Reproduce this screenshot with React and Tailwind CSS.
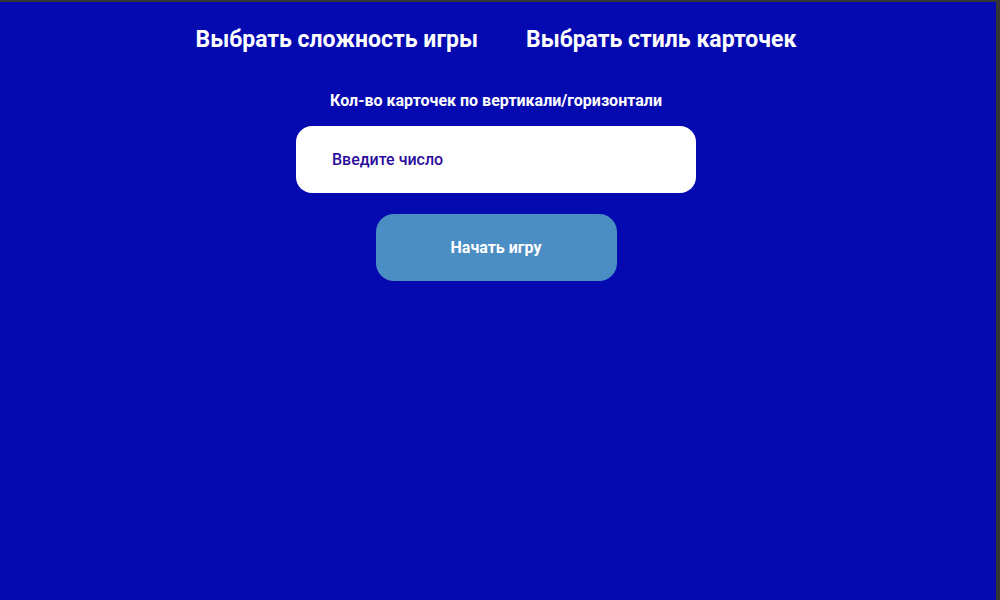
export default function App() {
  return (
    <div
      className="h-[600px] w-[1000px] border-t-2 border-r-4 border-[#353535] bg-[#0509b0] pr-1 flex flex-col items-center"
      style={{ fontFamily: "Roboto, 'Noto Sans', sans-serif" }}
    >
      <nav className="flex gap-12 pt-[22px]">
        <button className="text-[23px] font-bold text-white leading-8">Выбрать сложность игры</button>
        <button className="text-[23px] font-bold text-white leading-8">Выбрать стиль карточек</button>
      </nav>

      <p className="mt-[35px] text-[16px] font-bold text-white leading-5">
        Кол-во карточек по вертикали/горизонтали
      </p>

      <input
        type="text"
        placeholder="Введите число"
        className="mt-[15px] h-[67px] w-[400px] rounded-[16px] bg-white pl-9 text-[16px] font-medium text-[#2b0c9c] placeholder:text-[#2b0c9c] outline-none"
      />

      <button className="mt-[21px] h-[67px] w-[241px] rounded-[18px] bg-[#4b8ec4] text-[16px] font-bold text-white">
        Начать игру
      </button>
    </div>
  );
}
